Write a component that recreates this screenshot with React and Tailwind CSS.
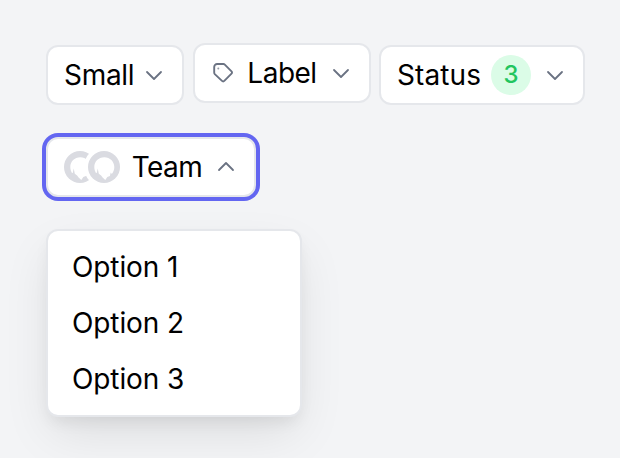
import React, { useState } from 'react';
import clsx from 'clsx';

const Chevron = ({ up = false }) => (
  <svg
    viewBox="0 0 20 20"
    className={clsx('w-5 h-5 shrink-0 text-gray-500', up && 'rotate-180')}
    fill="none"
    stroke="currentColor"
    strokeWidth="1.8"
    strokeLinecap="round"
    strokeLinejoin="round"
  >
    <path d="M3 7l7 7 7-7" />
  </svg>
);

const TagIcon = () => (
  <svg
    viewBox="0 0 24 24"
    className="w-6 h-6 shrink-0 text-gray-500"
    fill="none"
    stroke="currentColor"
    strokeWidth="1.9"
    strokeLinejoin="round"
  >
    <path d="M6.200 3h6.200c.5 0 1 .2 1.400.6l6.700 6.700c.7.7.7 1.600 0 2.300l-7.200 7.300c-.7.7-1.600.7-2.300 0l-7.200-6.800c-.4-.4-.6-.9-.6-1.500V6c0-1.700 1.300-3 3-3z" />
    <circle cx="7.300" cy="7.400" r="1" fill="currentColor" stroke="none" opacity="0.700" />
  </svg>
);

const Avatar = ({ className }) => (
  <span className={clsx('block w-8 h-8 rounded-full bg-[#dadbe1] ring-4 ring-white', className)}>
    <svg viewBox="0 0 32 32" className="w-8 h-8" fill="#fff">
      <path d="M16.300 6.300C10.500 6.300 6.300 10.700 6.300 16c0 2 .5 4 1.500 5.700l1 .4.900-4.600 1.100 5.300 2.300 1.600 1.500 2.200 2.700 2.300 2-2.800 2.600-1 .8-3.600 1.100 1.400c1.600-1.800 2.500-4.200 2.500-6.900C26.300 10.700 22 6.300 16.300 6.300z" />
    </svg>
  </span>
);

const DropdownButton = ({ className, open, children, ...props }) => (
  <button
    type="button"
    className={clsx(
      'flex items-center h-[60px] pl-4 pr-[18px] bg-white border-2 border-gray-200 rounded-xl outline-none',
      open && 'ring-4 ring-[#6366f1]',
      className
    )}
    {...props}
  >
    {children}
    <Chevron up={open} />
  </button>
);

const options = ['Option 1', 'Option 2', 'Option 3'];

const App = () => {
  const [open, setOpen] = useState(true);

  return (
    <div className="h-screen overflow-hidden bg-gray-100 pl-[46px] pt-[43px] font-['Inter',sans-serif] text-[28px] leading-8 text-black">
      {/* Filters */}
      <div className="flex items-start">
        <DropdownButton className="w-[138px] mt-0.5 justify-between">
          <span className="tracking-[-0.3px]">Small</span>
        </DropdownButton>
        <DropdownButton className="w-[178px] ml-[9px] justify-between">
          <TagIcon />
          <span className="tracking-[-0.5px] -translate-x-px">Label</span>
        </DropdownButton>
        <DropdownButton className="w-[206px] mt-0.5 ml-2 justify-between">
          <span className="tracking-[0.1px]">Status</span>
          <span className="flex items-center justify-center w-10 h-10 -ml-1 rounded-full bg-green-100 text-[#22c55e] text-2xl font-medium">
            3
          </span>
        </DropdownButton>
      </div>

      {/* Team select */}
      <DropdownButton
        className="w-[210px] mt-8 justify-between"
        open={open}
        onClick={() => setOpen(!open)}
      >
        <span className="flex">
          <Avatar />
          <Avatar className="-ml-2 relative" />
        </span>
        <span className="tracking-[-0.5px] -translate-x-px">Team</span>
      </DropdownButton>

      {open && (
        <ul className="w-64 h-[188px] mt-8 py-2 bg-white border-2 border-gray-200 rounded-xl tracking-[-0.1px] shadow-[0_20px_50px_-6px_rgba(0,0,0,0.1),0_8px_16px_-4px_rgba(0,0,0,0.08)]">
          {options.map((option) => (
            <li key={option} className="flex items-center h-14 px-6">
              {option}
            </li>
          ))}
        </ul>
      )}
    </div>
  );
};

export default App;
